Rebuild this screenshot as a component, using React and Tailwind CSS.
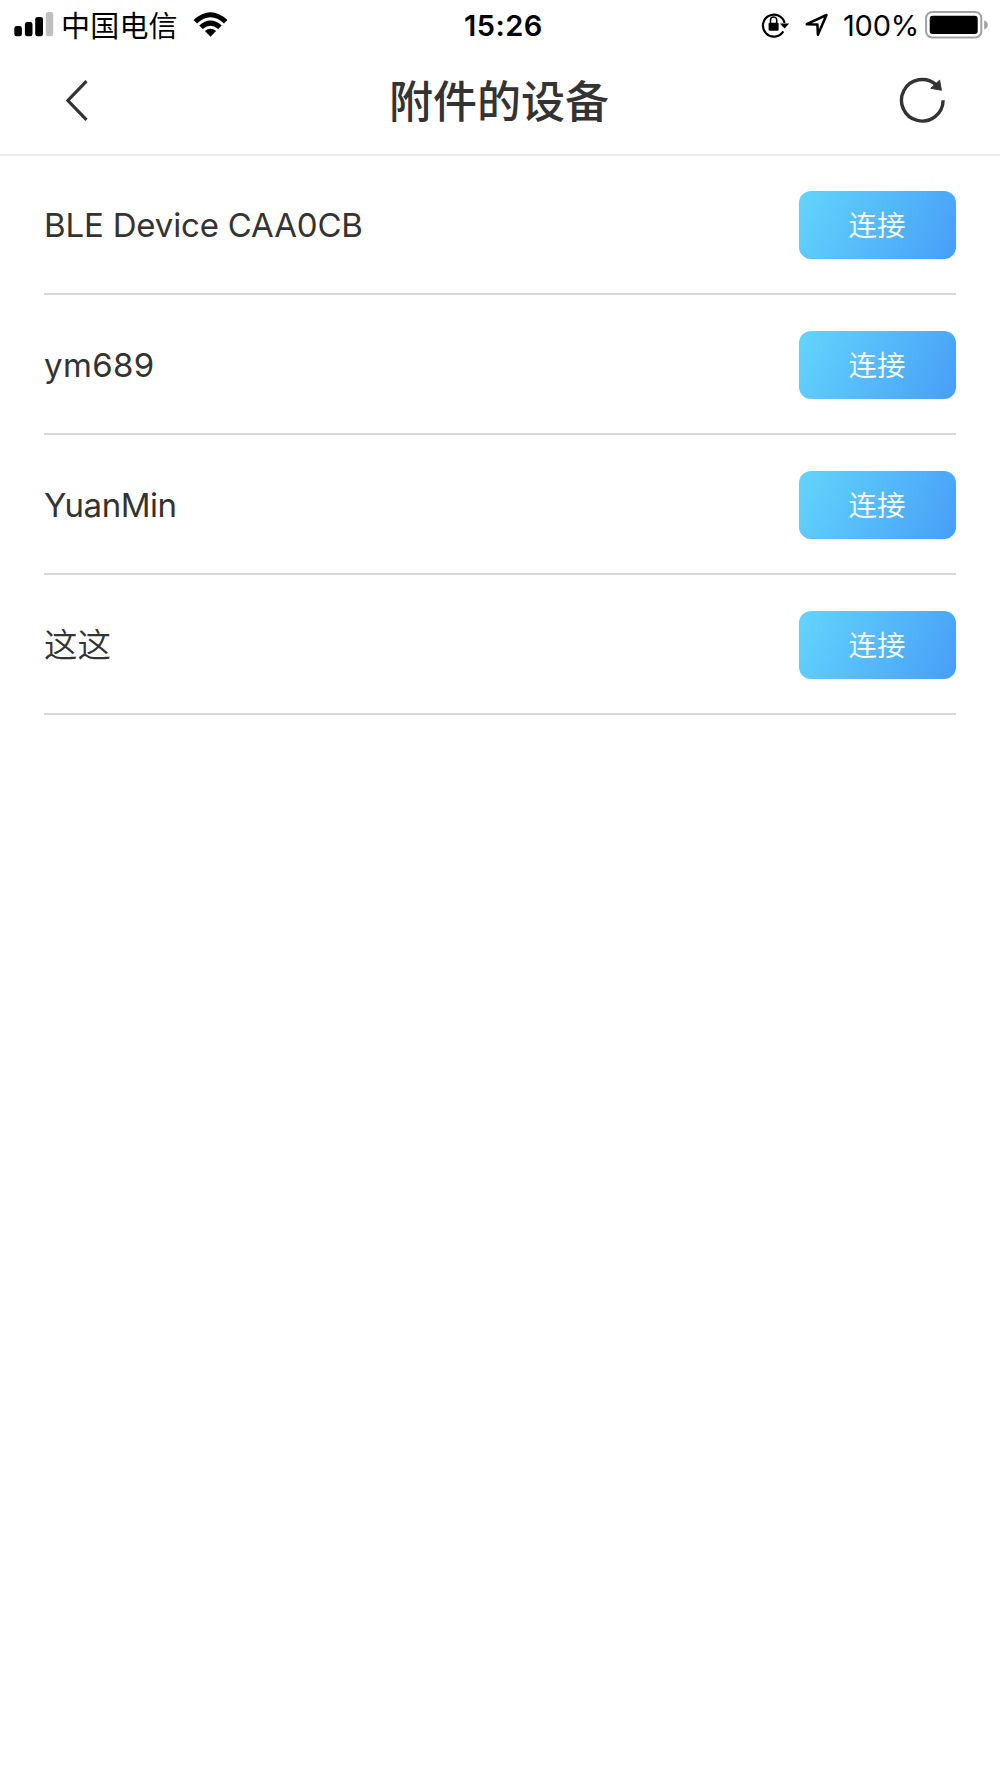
const DEVICES = [
  { name: "BLE Device CAA0CB", text: "text-[33px] tracking-[-0.17px]" },
  { name: "ym689", text: "text-[33px] tracking-[0.35px]" },
  { name: "YuanMin", text: "text-[33px] tracking-[-0.5px]" },
  { name: "这这", text: "pt-[2px] text-[33.5px] font-[350]" },
];

function Signal() {
  return (
    <svg width="40" height="26" viewBox="0 0 40 26" className="shrink-0">
      <rect x="0.3" y="14" width="7.6" height="10.3" rx="2.4" />
      <rect x="10.9" y="10" width="7.6" height="14.3" rx="2.4" />
      <rect x="21.2" y="5" width="7.8" height="19.3" rx="2.4" />
      <rect x="31.8" y="0" width="7.4" height="24.3" rx="2.4" fill="#bfbfbf" />
    </svg>
  );
}

function Wifi() {
  return (
    <svg width="36" height="26" viewBox="0 0 36 26" className="shrink-0">
      <path d="M0.6 8 Q17.5 -7.4 34.4 8 L31 11.4 Q17.5 -1 4 11.4 Z" />
      <path d="M6.3 13.6 Q17.5 3.6 28.7 13.6 L25.2 17.1 Q17.5 10.5 9.8 17.1 Z" />
      <path d="M11.9 19.1 Q17.5 14.3 23.1 19.1 L17.5 24.7 Z" />
    </svg>
  );
}

function RotationLock() {
  return (
    <svg width="30" height="28" viewBox="0 0 30 28" className="-mt-px shrink-0">
      <path d="M22.3 20.4 A11 11 0 1 1 23.6 12" fill="none" stroke="#000" strokeWidth="2.1" />
      <path d="M18.9 12.4 H28.2 L23.5 17.4 Z" />
      <rect x="7.6" y="11.8" width="10" height="8" rx="1" />
      <path d="M9.5 12 V9 a3.1 3.1 0 0 1 6.2 0 V12" fill="none" stroke="#000" strokeWidth="1.5" />
    </svg>
  );
}

function Location() {
  return (
    <svg width="24" height="24" viewBox="0 0 24 24" className="shrink-0">
      <path d="M1.8 11.2 L21.5 2 L12.9 21.8 L12.4 11.4 Z" fill="none" stroke="#000" strokeWidth="2.5" strokeLinejoin="round" />
    </svg>
  );
}

function Battery() {
  return (
    <svg width="64" height="28" viewBox="0 0 64 28" className="shrink-0">
      <rect x="1.1" y="1.1" width="55.2" height="25.4" rx="6" fill="none" stroke="#a0a0a0" strokeWidth="2" />
      <rect x="4.7" y="4.7" width="48" height="18.2" rx="3" />
      <path d="M59.2 9.2 Q62.8 11 62.8 13.9 T59.2 18.6 Z" fill="#a0a0a0" />
    </svg>
  );
}

function StatusBar() {
  return (
    <div className="flex h-[50px] items-center pl-[14px] pr-[11px] text-[29px] leading-[50px] text-black">
      <div className="flex w-[450px] items-center">
        <Signal />
        <span className="ml-[7px] pt-[3px] tracking-[0.2px]">中国电信</span>
        <span className="ml-[15px]"><Wifi /></span>
      </div>
      <span className="pt-[2px] text-[29px] font-semibold tracking-[0.5px]">15:26</span>
      <div className="flex flex-1 items-center justify-end">
        <RotationLock />
        <span className="ml-[14px]"><Location /></span>
        <span className="ml-[14px] pt-[2px] tracking-[-0.2px]">100%</span>
        <span className="ml-[6px] -mt-px"><Battery /></span>
      </div>
    </div>
  );
}

function Header() {
  return (
    <header className="grid h-[106px] grid-cols-[1fr_auto_1fr] items-center border-b-2 border-[#ebebeb] pb-1 pl-[60px] pr-[53px]">
      <button aria-label="Back" className="w-[48px]">
        <svg width="30" height="44" viewBox="0 0 30 44">
          <path d="M26.5 3.2 L7.9 22.5 L26.5 41.8" fill="none" stroke="#333" strokeWidth="3.2" />
        </svg>
      </button>
      <h1 className="-ml-[9px] pt-1 text-[44px] font-medium leading-none">附件的设备</h1>
      <button aria-label="Refresh" className="w-[48px] justify-self-end">
        <svg width="48" height="48" viewBox="0 0 48 48">
          <path d="M44.1 24.3 A20.8 20.8 0 1 1 37.2 8.8" fill="none" stroke="#333" strokeWidth="3.4" />
          <path d="M40.6 4.2 L42.4 14.2 L31.8 12.3 Z" fill="#333" stroke="#333" strokeWidth="1" strokeLinejoin="round" />
        </svg>
      </button>
    </header>
  );
}

function DeviceRow({ name, text }) {
  return (
    <li className="flex h-[140px] items-center justify-between border-b-2 border-[#d8d9d9] pt-[2px]">
      <span className={`leading-none ${text}`}>{name}</span>
      <button className="h-[68px] w-[157px] rounded-xl bg-linear-[115deg] from-[#62d5fb] to-[#479ef8] pt-[2px] pr-px text-[28.5px] font-[350] text-white">
        连接
      </button>
    </li>
  );
}

export default function App() {
  return (
    <main className="h-[1778px] w-[1000px] overflow-hidden bg-white font-['Inter','Noto_Sans_CJK_SC',sans-serif] text-[#333]">
      <StatusBar />
      <Header />
      <ul className="-mt-px px-[44px]">
        {DEVICES.map((device) => (
          <DeviceRow key={device.name} {...device} />
        ))}
      </ul>
    </main>
  );
}
